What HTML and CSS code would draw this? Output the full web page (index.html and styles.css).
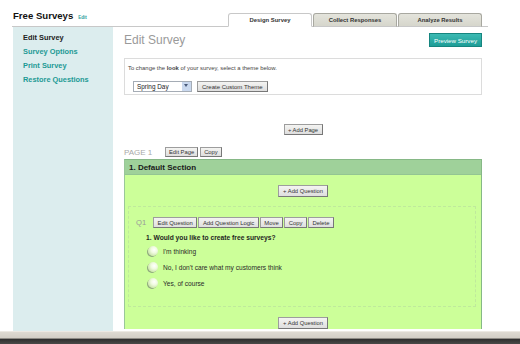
FILE: index.html
```html
<!DOCTYPE html>
<html>
<head>
<meta charset="utf-8">
<link rel="stylesheet" href="styles.css">
</head>
<body>
<div class="viewport">
  <header class="top">
    <div class="brand"><span class="title">Free Surveys</span><a class="edit-link">Edit</a></div>
    <nav class="tabs">
      <span class="tab active">Design Survey</span>
      <span class="tab">Collect Responses</span>
      <span class="tab">Analyze Results</span>
    </nav>
  </header>
  <div class="main">
    <aside class="side">
      <a class="side-link current">Edit Survey</a>
      <a class="side-link">Survey Options</a>
      <a class="side-link">Print Survey</a>
      <a class="side-link">Restore Questions</a>
    </aside>
    <section class="content">
      <div class="content-head">
        <h1 class="page-title">Edit Survey</h1>
        <button class="btn-preview">Preview Survey</button>
      </div>
      <div class="theme-box">
        <p class="theme-text">To change the <b>look</b> of your survey, select a theme below.</p>
        <div class="theme-row">
          <div class="select"><span>Spring Day</span><span class="select-arrow"></span></div>
          <button class="btn">Create Custom Theme</button>
        </div>
      </div>
      <div class="center-row add-page"><button class="btn">+ Add Page</button></div>
      <div class="page-row">
        <span class="page-label">PAGE 1</span>
        <button class="btn">Edit Page</button>
        <button class="btn">Copy</button>
      </div>
      <div class="section">
        <div class="section-head">1. Default Section</div>
        <div class="section-body">
          <div class="center-row"><button class="btn btn-tall">+ Add Question</button></div>
          <div class="question">
            <div class="q-row">
              <span class="q-label">Q1</span>
              <button class="btn">Edit Question</button>
              <button class="btn">Add Question Logic</button>
              <button class="btn">Move</button>
              <button class="btn">Copy</button>
              <button class="btn">Delete</button>
            </div>
            <div class="q-text">1. Would you like to create free surveys?</div>
            <ul class="options">
              <li><span class="radio"></span>I'm thinking</li>
              <li><span class="radio"></span>No, I don't care what my customers think</li>
              <li><span class="radio"></span>Yes, of course</li>
            </ul>
          </div>
          <div class="center-row add-q2"><button class="btn btn-tall">+ Add Question</button></div>
        </div>
      </div>
    </section>
  </div>
</div>
<div class="statusbar"><div class="bar-light"></div><div class="bar-dark"></div></div>
</body>
</html>
```
FILE: styles.css
```css
* { box-sizing: border-box; }
html, body { margin: 0; padding: 0; background: #fff; }
body { width: 520px; height: 344px; overflow: hidden; font-family: "Liberation Sans", Arial, sans-serif; color: #222; }

.viewport { height: 331px; overflow: hidden; }

.top {
  display: flex;
  justify-content: space-between;
  align-items: flex-end;
  height: 27px;
  margin: 0 32px 0 12px;
  border-bottom: 1px solid #c8c8c8;
}
.brand { padding: 0 0 5px 1px; display: flex; align-items: baseline; }
.title { font-weight: bold; font-size: 9.6px; color: #111; }
.edit-link { font-size: 4.5px; color: #2aa19b; margin-left: 5px; font-weight: bold; }

.tabs { display: flex; gap: 1px; margin-right: 6px; margin-bottom: -1px; }
.tab {
  width: 84px; height: 14px;
  display: flex; align-items: center; justify-content: center;
  font-size: 5.9px; font-weight: bold; color: #333;
  background: linear-gradient(#e4e4dc, #d6d6cc);
  border: 1px solid #a8a8a0; border-bottom-color: #c8c8c8;
  border-radius: 3px 3px 0 0;
}
.tab.active { background: #fff; border-color: #c8c8c8; border-bottom-color: #fff; }

.main { display: flex; padding-left: 13px; }
.side {
  width: 100px; min-height: 320px;
  background: #dcedee;
  padding: 4px 0 0 10px;
  display: flex; flex-direction: column;
}
.side-link { font-size: 7.4px; font-weight: bold; line-height: 14px; color: #1c9a95; }
.side-link.current { color: #222; }

.content { width: 358px; margin-left: 11px; display: flex; flex-direction: column; }
.content-head { display: flex; justify-content: space-between; align-items: center; height: 14px; margin-top: 6px; }
.page-title { margin: 0; font-size: 12px; font-weight: normal; color: #9a9a9a; }
.btn-preview {
  width: 53px; height: 14px; padding: 0;
  font-family: inherit; font-size: 6.2px; color: #fff;
  background: linear-gradient(#3cbab3, #1e9d97);
  border: 1px solid #16857f;
}

.theme-box { margin-top: 11px; height: 37px; border: 1px solid #dcdcdc; padding: 5px 0 0 3px; }
.theme-text { margin: 0; font-size: 5.9px; line-height: 9px; color: #444; }
.theme-row { display: flex; align-items: center; gap: 5px; margin: 8px 0 0 5px; }
.select {
  width: 59px; height: 11px;
  border: 1px solid #a5acb5; background: #fff;
  display: flex; align-items: center; justify-content: space-between;
  font-size: 6.4px; color: #222; padding-left: 3px;
}
.select-arrow { width: 9px; height: 9px; background: #c9d8ee; position: relative; }
.select-arrow::after {
  content: ""; position: absolute; left: 2px; top: 2px;
  border-left: 2.5px solid transparent; border-right: 2.5px solid transparent; border-top: 3px solid #4a5a7a;
}

.btn {
  height: 11px; padding: 0 3px;
  font-family: inherit; font-size: 5.8px; color: #333;
  background: linear-gradient(#f4f4f2, #dedede);
  border: 1px solid #9d9d9d;
  border-right-color: #777; border-bottom-color: #777;
  white-space: nowrap;
}
.theme-row .btn { padding: 0 4px; font-size: 6px; }
.btn-tall { height: 12px; }
.center-row { display: flex; justify-content: center; }
.add-page { margin-top: 29px; }
.add-page .btn { width: 39px; }

.page-row { display: flex; align-items: center; gap: 2px; margin-top: 12px; height: 10px; }
.page-row .btn { height: 10px; }
.page-label { font-size: 8px; color: #a8a8a8; width: 39px; }

.section { margin-top: 2px; border: 1px solid #86b886; border-bottom: none; border-left-color: #9ac79a; background: #ccff99; }
.section-head { height: 15px; background: #9fd19a; font-size: 8px; font-weight: bold; color: #1a1a1a; padding-left: 4px; display: flex; align-items: center; border-bottom: 1px solid #93c593; }
.section-body { padding: 10px 0 0 0; }
.section-body > .center-row .btn { width: 50px; }

.question {
  margin: 9px 5px 0 3px;
  height: 101px;
  border: 1px dashed #bfe99c;
  padding: 10px 0 0 7px;
}
.q-row { display: flex; align-items: center; gap: 1px; height: 11px; }
.q-row .btn { height: 11px; padding: 0 3.5px; font-size: 5.9px; }
.q-label { font-size: 7.6px; color: #9a9a9a; width: 16px; }
.q-text { font-size: 6.7px; font-weight: bold; color: #1e1e1e; margin: 5px 0 0 10px; line-height: 10px; }
.options { list-style: none; margin: 0; padding: 0 0 0 12px; }
.options li { display: flex; align-items: center; height: 16px; font-size: 6.6px; color: #2a2a2a; }
.radio {
  width: 10px; height: 10px; border-radius: 50%; margin-right: 5px;
  background: radial-gradient(circle at 62% 38%, #ffffff 0, #f0fbe0 35%, #cfe6b0 70%, #7d9a6a 100%);
  box-shadow: -1px 1px 0 #8fa87f;
}
.add-q2 { margin-top: 10px; }

.statusbar { height: 13px; display: flex; flex-direction: column; }
.bar-light { height: 8px; background: linear-gradient(#dedad2, #d2cec6); border-top: 1px solid #ece9e3; border-bottom: 1px solid #8e8b85; }
.bar-dark { flex: 1; background: linear-gradient(#2e2e2e, #4a4a48); }
```
